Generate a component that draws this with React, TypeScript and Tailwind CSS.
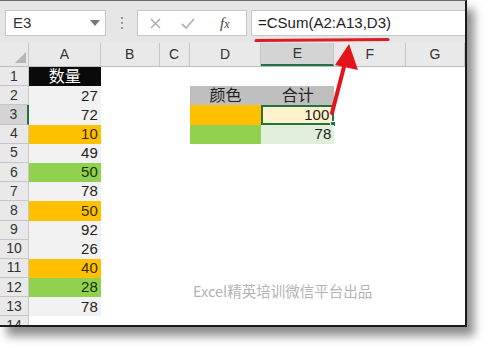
import React from "react";

const colW = [29, 72, 59, 30, 72, 73, 72, 59];
const cols = ["A", "B", "C", "D", "E", "F", "G"];

type Cell = { v?: string; bg?: string; color?: string; align?: "right" | "center"; extra?: string };

const aVals: Cell[] = [
  { v: "数量", bg: "bg-[#0a0a0a]", color: "text-white", align: "center" },
  { v: "27", bg: "bg-[#f2f2f2]" },
  { v: "72", bg: "bg-[#f2f2f2]" },
  { v: "10", bg: "bg-[#ffc000]", color: "text-[#3a2c00]" },
  { v: "49", bg: "bg-[#f2f2f2]" },
  { v: "50", bg: "bg-[#92d050]", color: "text-[#17320a]" },
  { v: "78", bg: "bg-[#f2f2f2]" },
  { v: "50", bg: "bg-[#ffc000]", color: "text-[#3a2c00]" },
  { v: "92", bg: "bg-[#f2f2f2]" },
  { v: "26", bg: "bg-[#f2f2f2]" },
  { v: "40", bg: "bg-[#ffc000]", color: "text-[#3a2c00]" },
  { v: "28", bg: "bg-[#92d050]", color: "text-[#17320a]" },
  { v: "78", bg: "bg-[#f2f2f2]" },
  {},
];

function cellFor(r: number, c: number): Cell {
  if (c === 0) return aVals[r];
  if (c === 3) {
    if (r === 1) return { v: "颜色", bg: "bg-[#bfbfbf]", align: "center" };
    if (r === 2) return { bg: "bg-[#ffc000]" };
    if (r === 3) return { bg: "bg-[#92d050]" };
  }
  if (c === 4) {
    if (r === 1) return { v: "合计", bg: "bg-[#bfbfbf]", align: "center" };
    if (r === 2) return { v: "100", bg: "bg-[#fff2cc]", extra: "sel" };
    if (r === 3) return { v: "78", bg: "bg-[#e2efda]" };
  }
  return {};
}

export default function App() {
  const rowH = 19.2;
  return (
    <div className="w-[488px] h-[348px] bg-white overflow-hidden" style={{ fontFamily: '"Liberation Sans", Arial, "Noto Sans CJK SC", sans-serif' }}>
      <div className="relative w-[467px] h-[327px] bg-white border-r-2 border-b-2 border-t border-[#1a1a1a] border-t-[#6a6a6a] shadow-[7px_9px_9px_rgba(0,0,0,0.45)] overflow-hidden flex flex-col">
        {/* formula bar */}
        <div className="h-[42px] bg-[#e6e6e6] flex items-center pt-[2px] shrink-0">
          <div className="ml-[5px] w-[101px] h-[26px] bg-white border border-[#c8c8c8] flex items-center justify-between pl-[7px] pr-[5px]">
            <span className="text-[15px] text-[#333]">E3</span>
            <svg width="10" height="6" viewBox="0 0 10 6"><path d="M0 0 L10 0 L5 6 Z" fill="#777" /></svg>
          </div>
          <div className="w-[31px] flex flex-col items-center gap-[3px]">
            <span className="w-[2px] h-[2px] bg-[#999]" />
            <span className="w-[2px] h-[2px] bg-[#999]" />
            <span className="w-[2px] h-[2px] bg-[#999]" />
          </div>
          <div className="w-[110px] h-[26px] bg-white border border-[#c8c8c8] flex items-center">
            <svg className="ml-[12px]" width="11" height="11" viewBox="0 0 11 11"><path d="M1 1 L10 10 M10 1 L1 10" stroke="#a8a8a8" strokeWidth="1.3" /></svg>
            <svg className="ml-[20px]" width="14" height="11" viewBox="0 0 14 11"><path d="M1 6 L5 10 L13 1" stroke="#b4b4b4" strokeWidth="1.8" fill="none" /></svg>
            <span className="ml-[25px] text-[15px] italic text-[#444]" style={{ fontFamily: '"Liberation Serif", serif' }}>f<span className="text-[12px]">x</span></span>
          </div>
          <div className="ml-[4px] flex-1 h-[26px] bg-white border border-[#c8c8c8] border-r-0 flex items-center pl-[6px]">
            <span className="text-[15px] text-[#222]">=CSum(A2:A13,D3)</span>
          </div>
        </div>
        {/* sheet */}
        <div className="flex-1 flex flex-col">
          {/* column headers */}
          <div className="flex h-[24px] bg-[#e9e9e9] border-b border-[#bdbdbd] shrink-0">
            <div className="w-[29px] h-full relative border-r border-[#c6c6c6]">
              <svg className="absolute right-[2px] bottom-[3px]" width="11" height="11" viewBox="0 0 11 11"><path d="M11 0 L11 11 L0 11 Z" fill="#b5b5b5" /></svg>
            </div>
            {cols.map((c, i) => (
              <div
                key={c}
                className={`h-full flex items-center justify-center text-[14px] text-[#333] border-r border-[#c6c6c6] ${i === 4 ? "bg-[#d4d4d4] border-b-2 border-b-[#217346]" : ""}`}
                style={{ width: colW[i + 1] }}
              >
                {c}
              </div>
            ))}
          </div>
          {Array.from({ length: 14 }).map((_, r) => (
            <div key={r} className="flex shrink-0" style={{ height: rowH }}>
              <div className={`w-[29px] h-full flex items-center justify-center text-[14px] text-[#333] border-r border-b border-[#c6c6c6] ${r === 2 ? "bg-[#d4d4d4] border-r-2 border-r-[#217346]" : "bg-[#e9e9e9]"}`}>
                {r + 1}
              </div>
              {cols.map((_, c) => {
                const cell = cellFor(r, c);
                const sel = cell.extra === "sel";
                return (
                  <div
                    key={c}
                    className={`relative h-full flex items-center ${cell.align === "center" ? "justify-center" : "justify-end pr-[3px]"} ${cell.bg ?? ""} ${cell.color ?? "text-[#222]"} ${cell.v && /[^0-9]/.test(cell.v) ? "text-[16px]" : "text-[15px]"} ${sel ? "border-2 border-[#217346]" : ""}`}
                    style={{ width: colW[c + 1] }}
                  >
                    {cell.v}
                    {sel && <span className="absolute right-[-4px] bottom-[-4px] w-[6px] h-[6px] bg-[#217346] border border-white" />}
                  </div>
                );
              })}
            </div>
          ))}
        </div>
        {/* watermark */}
        <div className="absolute left-[193px] top-[279px] text-[14.5px] text-[#b4b4b4]" style={{ fontFamily: '"Noto Sans CJK SC", "Noto Sans", sans-serif' }}>
          Excel精英培训微信平台出品
        </div>
        {/* annotation overlay */}
        <svg className="absolute left-0 top-0 pointer-events-none" width="467" height="327" viewBox="0 0 467 327">
          <path d="M256 39.5 L388 38.5" stroke="#dc1e24" strokeWidth="3.2" strokeLinecap="round" />
          <path d="M332 112 L345 62" stroke="#e3141c" strokeWidth="4" strokeLinecap="round" />
          <path d="M349 43 L358 69 L335 64 Z" fill="#e3141c" />
        </svg>
      </div>
    </div>
  );
}
